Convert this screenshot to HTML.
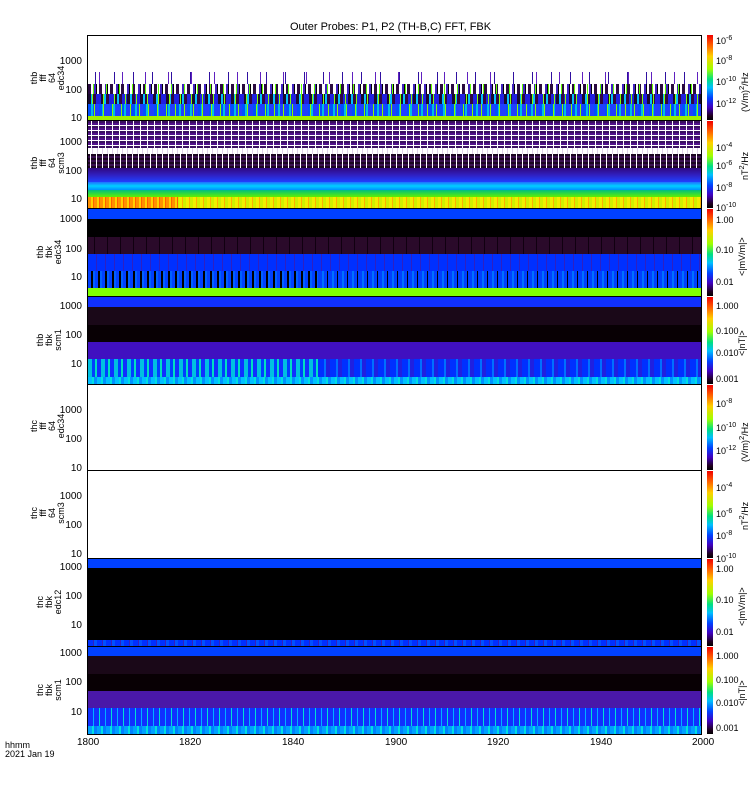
<!DOCTYPE html>
<html><head><meta charset="utf-8"><style>
body{margin:0;width:750px;height:800px;background:#fff;position:relative;overflow:hidden;font-family:"Liberation Sans",sans-serif;font-size:10px;color:#000}
.a{position:absolute}
.p{position:absolute;left:87px;width:615px;border:1px solid #000;box-sizing:border-box;overflow:hidden}
.b{position:absolute;left:0;right:0}
.cb{position:absolute;left:707px;width:6px;background:linear-gradient(#f00000,#ff6000 12%,#ffd000 25%,#a0ff00 40%,#00e080 52%,#00c0ff 62%,#0040ff 74%,#4000c0 85%,#200020 95%,#000)}
.yl{position:absolute;width:30px;text-align:right;left:52px;font-size:10px}
.pl{position:absolute;transform:rotate(-90deg);transform-origin:left top;font-size:9px;line-height:9px;text-align:center;width:60px}
.cl{position:absolute;left:716px;font-size:9px}
.cl sup{font-size:7px}
.un{position:absolute;left:737px;transform:rotate(-90deg);transform-origin:left top;font-size:9px;white-space:nowrap}
.x{position:absolute;top:737px;font-size:10px}
</style></head><body>
<div class="a" style="left:290px;top:21px;font-size:11px">Outer Probes: P1, P2 (TH-B,C) FFT, FBK</div>

<!-- panel1 -->
<div class="p" style="top:35px;height:86px">
<div class="b" style="top:36px;height:12px;background:repeating-linear-gradient(90deg,transparent 0 7px,#3010a0 7px 8px,transparent 8px 19px),repeating-linear-gradient(90deg,transparent 0 11px,#6020c0 11px 12px,transparent 12px 23px)"></div>
<div class="b" style="top:48px;height:10px;background:repeating-linear-gradient(90deg,transparent 0 5px,#60ff00 5px 6px,transparent 6px 13px),repeating-linear-gradient(90deg,#2a0a40 0 3px,#fff 3px 6px,#4020c0 6px 8px,#000 8px 9px,#fff 9px 11px)"></div>
<div class="b" style="top:58px;height:10px;background:repeating-linear-gradient(90deg,transparent 0 4px,#80ff00 4px 5px,transparent 5px 11px),repeating-linear-gradient(90deg,#1a0a30 0 3px,#00c0ff 3px 5px,#300840 5px 8px,#2020e0 8px 13px)"></div>
<div class="b" style="top:68px;height:12px;background:repeating-linear-gradient(90deg,transparent 0 6px,#80ff00 6px 7px,transparent 7px 9px),repeating-linear-gradient(90deg,#0050ff 0 3px,#00c0e0 3px 5px,#2040ff 5px 11px)"></div>
<div class="b" style="top:80px;height:6px;background:#a0f000"></div>
</div>
<!-- panel2 -->
<div class="p" style="top:120px;height:89px">
<div class="b" style="top:0;height:27px;background:repeating-linear-gradient(90deg,transparent 0 3px,#fff 3px 4px,transparent 4px 7px),repeating-linear-gradient(0deg,#3a1060 0 2px,#fff 2px 3px,#50108a 3px 5px)"></div>
<div class="b" style="top:27px;height:6px;background:repeating-linear-gradient(90deg,#fff 0 4px,#e0d0e8 4px 5px)"></div>
<div class="b" style="top:33px;height:14px;background:repeating-linear-gradient(90deg,transparent 0 2px,#fff 2px 3px,transparent 3px 6px),repeating-linear-gradient(0deg,#1a0520 0 2px,#3a1050 2px 4px)"></div>
<div class="b" style="top:47px;height:14px;background:linear-gradient(#300880,#3020c0 50%,#2040ff)"></div>
<div class="b" style="top:61px;height:8px;background:linear-gradient(#2070ff,#00d0ff,#0090ff)"></div>
<div class="b" style="top:69px;height:7px;background:linear-gradient(#00c080,#60f000)"></div>
<div class="b" style="top:76px;height:13px;background:repeating-linear-gradient(90deg,#f0f000 0 3px,#ffb000 3px 4px,#d0f000 4px 7px)"></div>
<div class="b" style="top:76px;height:13px;left:0;width:90px;background:repeating-linear-gradient(90deg,#ff9000 0 3px,#ffd000 3px 5px,#ff6000 5px 6px)"></div>
</div>
<!-- panel3 -->
<div class="p" style="top:208px;height:90px">
<div class="b" style="top:0;height:10px;background:#0040ff"></div>
<div class="b" style="top:10px;height:18px;background:#000"></div>
<div class="b" style="top:28px;height:17px;background:repeating-linear-gradient(90deg,#2a0a2a 0 6px,#100010 6px 7px,#2a0a2a 7px 13px)"></div>
<div class="b" style="top:45px;height:17px;background:repeating-linear-gradient(90deg,#0030ff 0 8px,#3020c0 8px 9px)"></div>
<div class="b" style="top:62px;height:17px;background:repeating-linear-gradient(90deg,#0040ff 0 4px,#0070ff 4px 6px,#0040ff 6px 9px,#000 9px 10px)"></div>
<div class="b" style="top:62px;height:17px;left:0;width:230px;background:repeating-linear-gradient(90deg,#0040ff 0 3px,#000 3px 5px,#0060ff 5px 7px)"></div>
<div class="b" style="top:79px;height:11px;background:#80ff00"></div>
</div>
<!-- panel4 -->
<div class="p" style="top:296px;height:89px">
<div class="b" style="top:0;height:10px;background:#1030ff"></div>
<div class="b" style="top:10px;height:18px;background:#1a0818"></div>
<div class="b" style="top:28px;height:17px;background:#080004"></div>
<div class="b" style="top:45px;height:17px;background:#4010c0"></div>
<div class="b" style="top:62px;height:18px;background:repeating-linear-gradient(90deg,#00c0e0 0 4px,#0040ff 4px 7px,#00e0c0 7px 9px,#1030ff 9px 13px)"></div>
<div class="b" style="top:62px;height:18px;left:230px;right:0;background:repeating-linear-gradient(90deg,#0030ff 0 6px,#0070ff 6px 8px,#2020e0 8px 12px)"></div>
<div class="b" style="top:80px;height:9px;background:repeating-linear-gradient(90deg,#00c0ff 0 4px,#00e0e0 4px 6px,#0090ff 6px 9px)"></div>
</div>
<!-- panel5/6 -->
<div class="p" style="top:384px;height:87px"></div>
<div class="p" style="top:470px;height:89px"></div>
<!-- panel7 -->
<div class="p" style="top:558px;height:89px">
<div class="b" style="top:0;height:9px;background:#0040ff"></div>
<div class="b" style="top:9px;height:72px;background:#000"></div>
<div class="b" style="top:81px;height:8px;background:repeating-linear-gradient(90deg,#0030ff 0 5px,#3020c0 5px 6px,#0050ff 6px 9px)"></div>
</div>
<!-- panel8 -->
<div class="p" style="top:646px;height:89px">
<div class="b" style="top:0;height:9px;background:#0040ff"></div>
<div class="b" style="top:9px;height:18px;background:#1a0818"></div>
<div class="b" style="top:27px;height:17px;background:#080004"></div>
<div class="b" style="top:44px;height:17px;background:#4a18a8"></div>
<div class="b" style="top:61px;height:18px;background:repeating-linear-gradient(90deg,#1030ff 0 5px,#00b0ff 5px 6px,#1030ff 6px 11px,#00e0d0 11px 12px)"></div>
<div class="b" style="top:79px;height:10px;background:repeating-linear-gradient(90deg,#00a0ff 0 4px,#00e0e0 4px 6px,#0080ff 6px 9px)"></div>
</div>

<!-- y labels -->
<div class="yl" style="top:56px">1000</div><div class="yl" style="top:85px">100</div><div class="yl" style="top:113px">10</div>
<div class="yl" style="top:137px">1000</div><div class="yl" style="top:166px">100</div><div class="yl" style="top:194px">10</div>
<div class="yl" style="top:214px">1000</div><div class="yl" style="top:244px">100</div><div class="yl" style="top:272px">10</div>
<div class="yl" style="top:301px">1000</div><div class="yl" style="top:330px">100</div><div class="yl" style="top:359px">10</div>
<div class="yl" style="top:405px">1000</div><div class="yl" style="top:434px">100</div><div class="yl" style="top:463px">10</div>
<div class="yl" style="top:491px">1000</div><div class="yl" style="top:520px">100</div><div class="yl" style="top:549px">10</div>
<div class="yl" style="top:562px">1000</div><div class="yl" style="top:591px">100</div><div class="yl" style="top:620px">10</div>
<div class="yl" style="top:648px">1000</div><div class="yl" style="top:677px">100</div><div class="yl" style="top:707px">10</div>

<div class="pl" style="left:30px;top:108px">thb<br>fff<br>64<br>edc34</div>
<div class="pl" style="left:30px;top:193px">thb<br>fff<br>64<br>scm3</div>
<div class="pl" style="left:36px;top:282px">thb<br>fbk<br>edc34</div>
<div class="pl" style="left:36px;top:370px">thb<br>fbk<br>scm1</div>
<div class="pl" style="left:30px;top:456px">thc<br>fff<br>64<br>edc34</div>
<div class="pl" style="left:30px;top:543px">thc<br>fff<br>64<br>scm3</div>
<div class="pl" style="left:36px;top:632px">thc<br>fbk<br>edc12</div>
<div class="pl" style="left:36px;top:720px">thc<br>fbk<br>scm1</div>

<!-- colorbars -->
<div class="cb" style="top:35px;height:85px"></div>
<div class="cb" style="top:121px;height:87px"></div>
<div class="cb" style="top:209px;height:87px"></div>
<div class="cb" style="top:297px;height:87px"></div>
<div class="cb" style="top:385px;height:85px"></div>
<div class="cb" style="top:471px;height:87px"></div>
<div class="cb" style="top:559px;height:87px"></div>
<div class="cb" style="top:647px;height:87px"></div>

<div class="cl" style="top:35px">10<sup>-6</sup></div><div class="cl" style="top:55px">10<sup>-8</sup></div><div class="cl" style="top:76px">10<sup>-10</sup></div><div class="cl" style="top:98px">10<sup>-12</sup></div>
<div class="cl" style="top:142px">10<sup>-4</sup></div><div class="cl" style="top:160px">10<sup>-6</sup></div><div class="cl" style="top:182px">10<sup>-8</sup></div><div class="cl" style="top:202px">10<sup>-10</sup></div>
<div class="cl" style="top:215px">1.00</div><div class="cl" style="top:245px">0.10</div><div class="cl" style="top:277px">0.01</div>
<div class="cl" style="top:301px">1.000</div><div class="cl" style="top:326px">0.100</div><div class="cl" style="top:348px">0.010</div><div class="cl" style="top:374px">0.001</div>
<div class="cl" style="top:398px">10<sup>-8</sup></div><div class="cl" style="top:422px">10<sup>-10</sup></div><div class="cl" style="top:445px">10<sup>-12</sup></div>
<div class="cl" style="top:482px">10<sup>-4</sup></div><div class="cl" style="top:508px">10<sup>-6</sup></div><div class="cl" style="top:530px">10<sup>-8</sup></div><div class="cl" style="top:553px">10<sup>-10</sup></div>
<div class="cl" style="top:564px">1.00</div><div class="cl" style="top:595px">0.10</div><div class="cl" style="top:627px">0.01</div>
<div class="cl" style="top:651px">1.000</div><div class="cl" style="top:675px">0.100</div><div class="cl" style="top:698px">0.010</div><div class="cl" style="top:723px">0.001</div>

<div class="un" style="top:112px">(V/m)<sup>2</sup>/Hz</div>
<div class="un" style="top:180px">nT<sup>2</sup>/Hz</div>
<div class="un" style="top:276px">&lt;|mV/m|&gt;</div>
<div class="un" style="top:356px">&lt;|nT|&gt;</div>
<div class="un" style="top:462px">(V/m)<sup>2</sup>/Hz</div>
<div class="un" style="top:530px">nT<sup>2</sup>/Hz</div>
<div class="un" style="top:626px">&lt;|mV/m|&gt;</div>
<div class="un" style="top:706px">&lt;|nT|&gt;</div>

<div class="x" style="left:77px">1800</div><div class="x" style="left:179px">1820</div><div class="x" style="left:282px">1840</div><div class="x" style="left:385px">1900</div><div class="x" style="left:487px">1920</div><div class="x" style="left:590px">1940</div><div class="x" style="left:692px">2000</div>
<div class="a" style="left:5px;top:741px;font-size:9px;line-height:9px">hhmm<br>2021 Jan 19</div>
</body></html>
